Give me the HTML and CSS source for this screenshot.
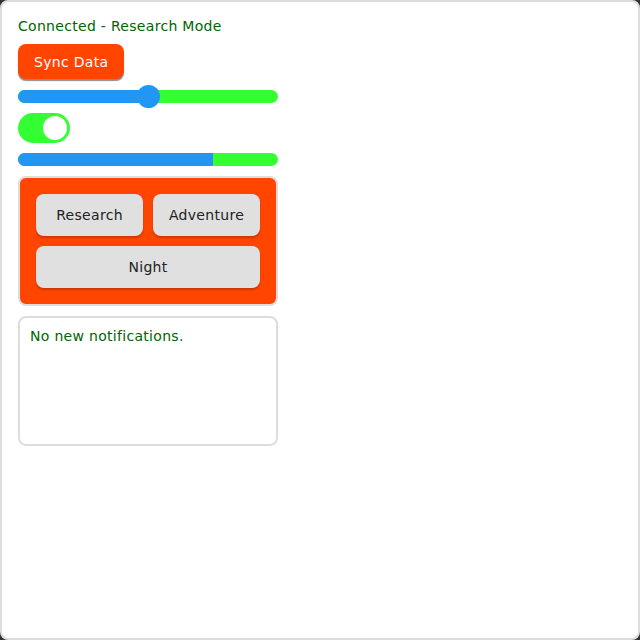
FILE: index.html
```html
<!DOCTYPE html>
<html>
<head>
<meta charset="utf-8">
<link rel="stylesheet" href="styles.css">
</head>
<body>
<div class="app">
  <div class="status">Connected - Research Mode</div>
  <div class="row"><button class="sync">Sync Data</button></div>
  <div class="slider">
    <div class="slider-fill" style="width: 50%"></div>
    <div class="slider-thumb" style="left: 50%"></div>
  </div>
  <div class="row"><div class="toggle"><div class="knob"></div></div></div>
  <div class="progress"><div class="progress-fill" style="width: 75%"></div></div>
  <div class="modes">
    <button class="mode">Research</button>
    <button class="mode">Adventure</button>
    <button class="mode wide">Night</button>
  </div>
  <div class="notes">No new notifications.</div>
</div>
</body>
</html>
```
FILE: styles.css
```css
html, body {
  margin: 0;
  padding: 0;
  background: #333;
}
.app {
  box-sizing: border-box;
  width: 640px;
  height: 640px;
  background: #fff;
  border: 2px solid #ddd;
  border-radius: 8px;
  padding: 16px;
  display: flex;
  flex-direction: column;
  font-family: "DejaVu Sans", sans-serif;
  font-size: 14px;
  letter-spacing: 0.3px;
}
.status {
  color: #006400;
  height: 16px;
  line-height: 16px;
}
.row {
  display: flex;
  margin-top: 10px;
}
.sync {
  font-family: inherit;
  font-size: 14px;
  letter-spacing: 0.3px;
  background: #ff4500;
  color: #fff;
  border: none;
  border-radius: 8px;
  height: 35px;
  padding: 0 16px;
  box-shadow: 0 2px 1px rgba(0,0,0,0.45);
}
.slider {
  position: relative;
  width: 260px;
  height: 13px;
  margin-top: 11px;
  background: #33ff33;
  border-radius: 7px;
}
.slider-fill {
  height: 100%;
  background: #2196f3;
  border-radius: 7px 0 0 7px;
}
.slider-thumb {
  position: absolute;
  top: 50%;
  width: 23px;
  height: 23px;
  margin: -11.5px 0 0 -11.5px;
  border-radius: 50%;
  background: #2196f3;
}
.toggle {
  box-sizing: border-box;
  width: 52px;
  height: 30px;
  border-radius: 15px;
  background: #33ff33;
  padding: 3px;
  display: flex;
  justify-content: flex-end;
}
.knob {
  width: 24px;
  height: 24px;
  border-radius: 50%;
  background: #fff;
}
.progress {
  width: 260px;
  height: 13px;
  margin-top: 10px;
  background: #33ff33;
  border-radius: 7px;
  overflow: hidden;
}
.progress-fill {
  height: 100%;
  background: #2196f3;
}
.modes {
  box-sizing: border-box;
  width: 260px;
  margin-top: 10px;
  background: #ff4500;
  border: 2px solid #ddd;
  border-radius: 8px;
  padding: 16px;
  display: grid;
  grid-template-columns: 1fr 1fr;
  gap: 10px;
}
.mode {
  font-family: inherit;
  font-size: 14px;
  letter-spacing: 0.3px;
  color: #222;
  background: #e0e0e0;
  border: none;
  border-radius: 8px;
  height: 42px;
  padding: 0;
  box-shadow: 0 2px 2px rgba(0,0,0,0.2);
}
.mode.wide {
  grid-column: 1 / span 2;
}
.notes {
  box-sizing: border-box;
  width: 260px;
  height: 130px;
  margin-top: 10px;
  border: 2px solid #ddd;
  border-radius: 8px;
  padding: 9px 10px;
  color: #006400;
  line-height: 18px;
}
```
